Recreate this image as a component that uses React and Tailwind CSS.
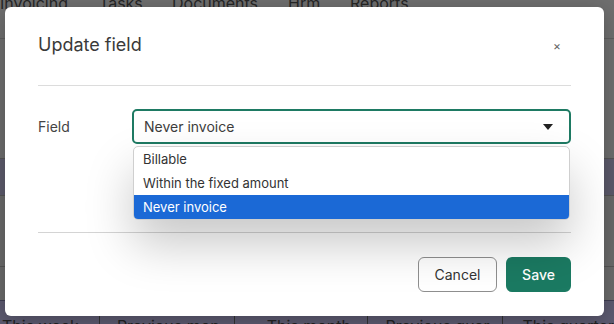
export default function App() {
  const font = { fontFamily: 'Inter, "Noto Sans", sans-serif' };
  return (
    <div className="relative w-[614px] h-[324px] overflow-hidden bg-[#6f6f6f]" style={font}>
      {/* background page */}
      <div className="absolute left-0 top-[-9px] flex text-[16px] leading-[24px] text-[#262626] whitespace-nowrap">
        <span className="w-[99px]">Invoicing</span>
        <span className="w-[73px]">Tasks</span>
        <span className="w-[116px]">Documents</span>
        <span className="w-[62px]">Hrm</span>
        <span>Reports</span>
      </div>
      <div className="absolute left-0 top-[38px] w-full h-[1px] bg-[#5f5f5f]" />
      <div className="absolute left-0 top-[100px] w-full h-[140px] flex flex-col">
        <div className="h-[58px] bg-[#6d6d6d]" />
        <div className="h-[1px] bg-[#555]" />
        <div className="h-[36px] bg-[#5d5b6c]" />
        <div className="h-[1px] bg-[#555]" />
        <div className="h-[44px] bg-[#6a6a6a]" />
      </div>
      <div className="absolute left-0 top-[240px] w-full h-[80px] bg-[#6b6b6b]" />
      <div className="absolute left-0 top-[266px] w-full h-[1px] bg-[#555]" />
      <div className="absolute left-0 top-[300px] w-full h-[24px] bg-[#5c5a70] border-t border-[#3e3d52] flex text-[16px] text-[#222] leading-[20px] whitespace-nowrap">
        <div className="w-[101px] pl-[2px] pt-[15px] border-r border-[#333]">This week</div>
        <div className="w-[136px] pl-[17px] pt-[15px] border-r border-[#333]">Previous mon...</div>
        <div className="w-[135px] pl-[32px] pt-[15px] border-r border-[#333]">This month</div>
        <div className="w-[136px] pl-[17px] pt-[15px] border-r border-[#333]">Previous quar...</div>
        <div className="pl-[19px] pt-[15px]">This quarter</div>
      </div>

      {/* modal */}
      <div className="absolute left-[5px] top-[7px] w-[599px] h-[309px] bg-white rounded-[6px] px-[33px] text-[#333] shadow-[0_4px_20px_rgba(0,0,0,0.25)]">
        <div className="flex items-center justify-between pt-[24px] pb-[26px] border-b border-[#dcdcdc]">
          <h2 className="text-[18px] leading-[28px] text-[#3a3a3a]">Update field</h2>
          <div className="flex justify-end mr-[10px] text-[12px] text-[#666] pt-[2px]">×</div>
        </div>

        <div className="h-[147px] pt-[23px] border-b border-[#d4d4d4]">
          <div className="flex items-start">
            <div className="w-[94px] h-[35px] flex items-center text-[14px] text-[#444]">Field</div>
            <div className="relative flex-1">
              <div className="h-[35px] border-2 border-[#1e7a63] rounded-[5px] flex items-center justify-between pl-[10px] pr-[16px] text-[14px] text-[#3d3d3d]">
                <span>Never invoice</span>
                <svg width="10" height="6" viewBox="0 0 10 6">
                  <path d="M0 0 L10 0 L5 6 Z" fill="#222" />
                </svg>
              </div>
              <div className="absolute left-[1px] right-[1px] top-[37px] bg-white border border-[#cfcfcf] rounded-[5px] overflow-hidden shadow-[0_24px_48px_rgba(0,0,0,0.22)] text-[13px] text-[#333]">
                <div className="h-[24px] leading-[24px] pl-[9px]">Billable</div>
                <div className="h-[24px] leading-[24px] pl-[9px]">Within the fixed amount</div>
                <div className="h-[24px] leading-[24px] pl-[9px] bg-[#1b69d6] text-white">Never invoice</div>
              </div>
            </div>
          </div>
        </div>

        <div className="flex justify-end gap-[9px] pt-[24px]">
          <button className="h-[35px] w-[79px] border border-[#8f8f8f] rounded-[6px] text-[14px] text-[#333] bg-white">Cancel</button>
          <button className="h-[35px] w-[65px] rounded-[6px] text-[14px] font-medium text-white bg-[#1b7a62]">Save</button>
        </div>
      </div>
    </div>
  );
}
